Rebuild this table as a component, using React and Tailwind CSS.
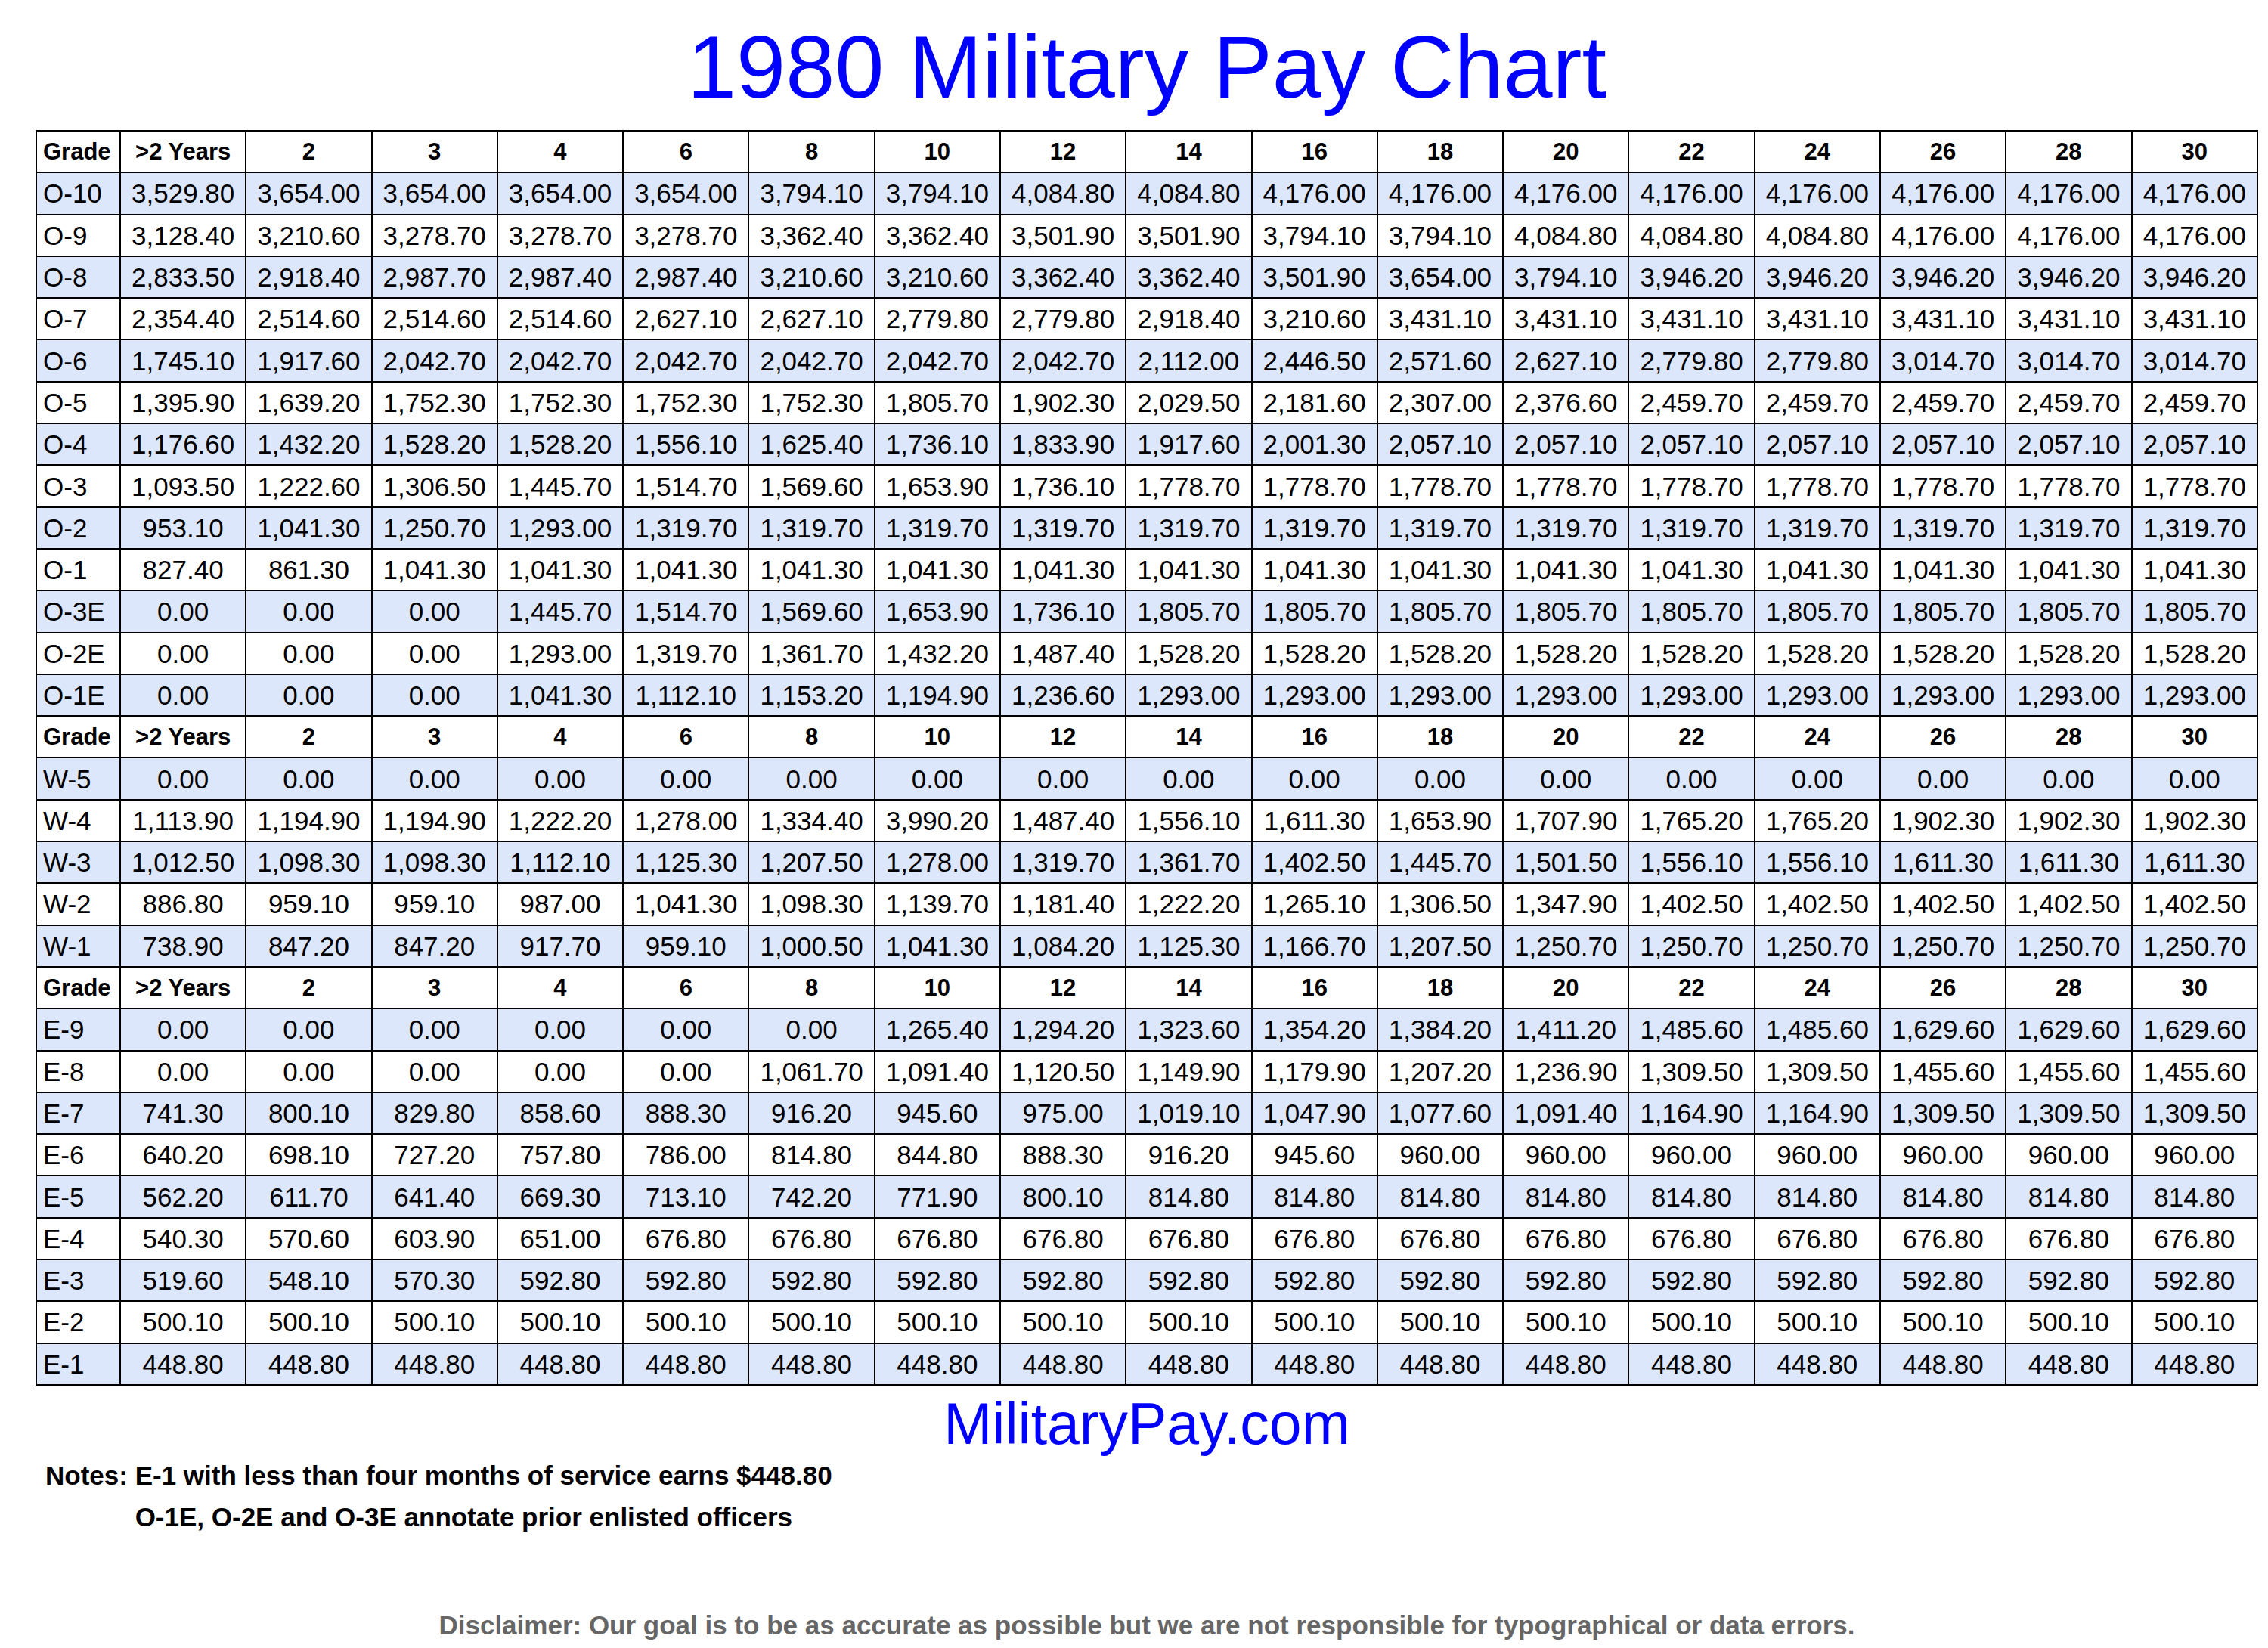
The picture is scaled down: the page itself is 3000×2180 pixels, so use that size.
import React from "react";

const cols = [">2 Years", "2", "3", "4", "6", "8", "10", "12", "14", "16", "18", "20", "22", "24", "26", "28", "30"];

const rep = (v, n) => Array(n).fill(v);

const officers = [
    ["O-10", ["3,529.80", "3,654.00", "3,654.00", "3,654.00", "3,654.00", "3,794.10", "3,794.10", "4,084.80", "4,084.80", ...rep("4,176.00", 8)]],
    ["O-9", ["3,128.40", "3,210.60", "3,278.70", "3,278.70", "3,278.70", "3,362.40", "3,362.40", "3,501.90", "3,501.90", "3,794.10", "3,794.10", "4,084.80", "4,084.80", "4,084.80", "4,176.00", "4,176.00", "4,176.00"]],
    ["O-8", ["2,833.50", "2,918.40", "2,987.70", "2,987.40", "2,987.40", "3,210.60", "3,210.60", "3,362.40", "3,362.40", "3,501.90", "3,654.00", "3,794.10", ...rep("3,946.20", 5)]],
    ["O-7", ["2,354.40", "2,514.60", "2,514.60", "2,514.60", "2,627.10", "2,627.10", "2,779.80", "2,779.80", "2,918.40", "3,210.60", ...rep("3,431.10", 7)]],
    ["O-6", ["1,745.10", "1,917.60", ...rep("2,042.70", 6), "2,112.00", "2,446.50", "2,571.60", "2,627.10", "2,779.80", "2,779.80", "3,014.70", "3,014.70", "3,014.70"]],
    ["O-5", ["1,395.90", "1,639.20", "1,752.30", "1,752.30", "1,752.30", "1,752.30", "1,805.70", "1,902.30", "2,029.50", "2,181.60", "2,307.00", "2,376.60", ...rep("2,459.70", 5)]],
    ["O-4", ["1,176.60", "1,432.20", "1,528.20", "1,528.20", "1,556.10", "1,625.40", "1,736.10", "1,833.90", "1,917.60", "2,001.30", ...rep("2,057.10", 7)]],
    ["O-3", ["1,093.50", "1,222.60", "1,306.50", "1,445.70", "1,514.70", "1,569.60", "1,653.90", "1,736.10", ...rep("1,778.70", 9)]],
    ["O-2", ["953.10", "1,041.30", "1,250.70", "1,293.00", ...rep("1,319.70", 13)]],
    ["O-1", ["827.40", "861.30", ...rep("1,041.30", 15)]],
    ["O-3E", ["0.00", "0.00", "0.00", "1,445.70", "1,514.70", "1,569.60", "1,653.90", "1,736.10", ...rep("1,805.70", 9)]],
    ["O-2E", ["0.00", "0.00", "0.00", "1,293.00", "1,319.70", "1,361.70", "1,432.20", "1,487.40", ...rep("1,528.20", 9)]],
    ["O-1E", ["0.00", "0.00", "0.00", "1,041.30", "1,112.10", "1,153.20", "1,194.90", "1,236.60", ...rep("1,293.00", 9)]],
];

const warrant = [
    ["W-5", rep("0.00", 17)],
    ["W-4", ["1,113.90", "1,194.90", "1,194.90", "1,222.20", "1,278.00", "1,334.40", "3,990.20", "1,487.40", "1,556.10", "1,611.30", "1,653.90", "1,707.90", "1,765.20", "1,765.20", "1,902.30", "1,902.30", "1,902.30"]],
    ["W-3", ["1,012.50", "1,098.30", "1,098.30", "1,112.10", "1,125.30", "1,207.50", "1,278.00", "1,319.70", "1,361.70", "1,402.50", "1,445.70", "1,501.50", "1,556.10", "1,556.10", "1,611.30", "1,611.30", "1,611.30"]],
    ["W-2", ["886.80", "959.10", "959.10", "987.00", "1,041.30", "1,098.30", "1,139.70", "1,181.40", "1,222.20", "1,265.10", "1,306.50", "1,347.90", ...rep("1,402.50", 5)]],
    ["W-1", ["738.90", "847.20", "847.20", "917.70", "959.10", "1,000.50", "1,041.30", "1,084.20", "1,125.30", "1,166.70", "1,207.50", ...rep("1,250.70", 6)]],
];

const enlisted = [
    ["E-9", [...rep("0.00", 6), "1,265.40", "1,294.20", "1,323.60", "1,354.20", "1,384.20", "1,411.20", "1,485.60", "1,485.60", "1,629.60", "1,629.60", "1,629.60"]],
    ["E-8", [...rep("0.00", 5), "1,061.70", "1,091.40", "1,120.50", "1,149.90", "1,179.90", "1,207.20", "1,236.90", "1,309.50", "1,309.50", "1,455.60", "1,455.60", "1,455.60"]],
    ["E-7", ["741.30", "800.10", "829.80", "858.60", "888.30", "916.20", "945.60", "975.00", "1,019.10", "1,047.90", "1,077.60", "1,091.40", "1,164.90", "1,164.90", "1,309.50", "1,309.50", "1,309.50"]],
    ["E-6", ["640.20", "698.10", "727.20", "757.80", "786.00", "814.80", "844.80", "888.30", "916.20", "945.60", ...rep("960.00", 7)]],
    ["E-5", ["562.20", "611.70", "641.40", "669.30", "713.10", "742.20", "771.90", "800.10", ...rep("814.80", 9)]],
    ["E-4", ["540.30", "570.60", "603.90", "651.00", ...rep("676.80", 13)]],
    ["E-3", ["519.60", "548.10", "570.30", ...rep("592.80", 14)]],
    ["E-2", rep("500.10", 17)],
    ["E-1", rep("448.80", 17)],
];

function HeaderRow() {
    return (
        <tr className="h-[55.3px]">
            <td className="border-2 border-black pl-[8px] text-left text-[31px] font-bold">Grade</td>
            {cols.map((c) => (
                <td key={c} className="border-2 border-black text-center text-[31px] font-bold">{c}</td>
            ))}
        </tr>
    )
}

function Section({ rows }) {
    return rows.map(([grade, vals], i) => (
        <tr key={grade} className={`h-[55.3px] ${i % 2 === 0 ? "bg-[#dde7fb]" : "bg-white"}`}>
            <td className="border-2 border-black pl-[8px] text-left text-[35px]">{grade}</td>
            {vals.map((v, j) => (
                <td key={j} className="border-2 border-black text-center text-[35px]">{v}</td>
            ))}
        </tr>
    ))
}

export default function App() {
    return (
        <div className="w-[3000px] h-[2180px] bg-white pl-[47px] pt-[31px] font-['Liberation_Sans',Arial,sans-serif] text-black">
            <div className="w-[2940px] flex flex-col">
                <h1 className="text-center text-[117px] leading-[116px] text-[#0000ff]">1980 Military Pay Chart</h1>

                <table className="mt-[25px] w-[2940px] table-fixed border-collapse border-2 border-black leading-none">
                    <colgroup>
                        <col className="w-[111px]" />
                        {cols.map((c) => <col key={c} />)}
                    </colgroup>
                    <tbody>
                        <HeaderRow />
                        <Section rows={officers} />
                        <HeaderRow />
                        <Section rows={warrant} />
                        <HeaderRow />
                        <Section rows={enlisted} />
                    </tbody>
                </table>

                <p className="mt-[12px] text-center text-[77px] leading-[77px] text-[#0000ff]">MilitaryPay.com</p>

                <div className="mt-[2px] pl-[13px] flex text-[35px] leading-[55px] font-bold">
                    <span className="whitespace-pre">Notes: </span>
                    <div className="flex flex-col">
                        <span>E-1 with less than four months of service earns $448.80</span>
                        <span>O-1E, O-2E and O-3E annotate prior enlisted officers</span>
                    </div>
                </div>

                <p className="mt-[88px] text-center text-[35px] leading-[55px] font-bold text-[#666666]">
                    Disclaimer: Our goal is to be as accurate as possible but we are not responsible for typographical or data errors.
                </p>
            </div>
        </div>
    )
}
